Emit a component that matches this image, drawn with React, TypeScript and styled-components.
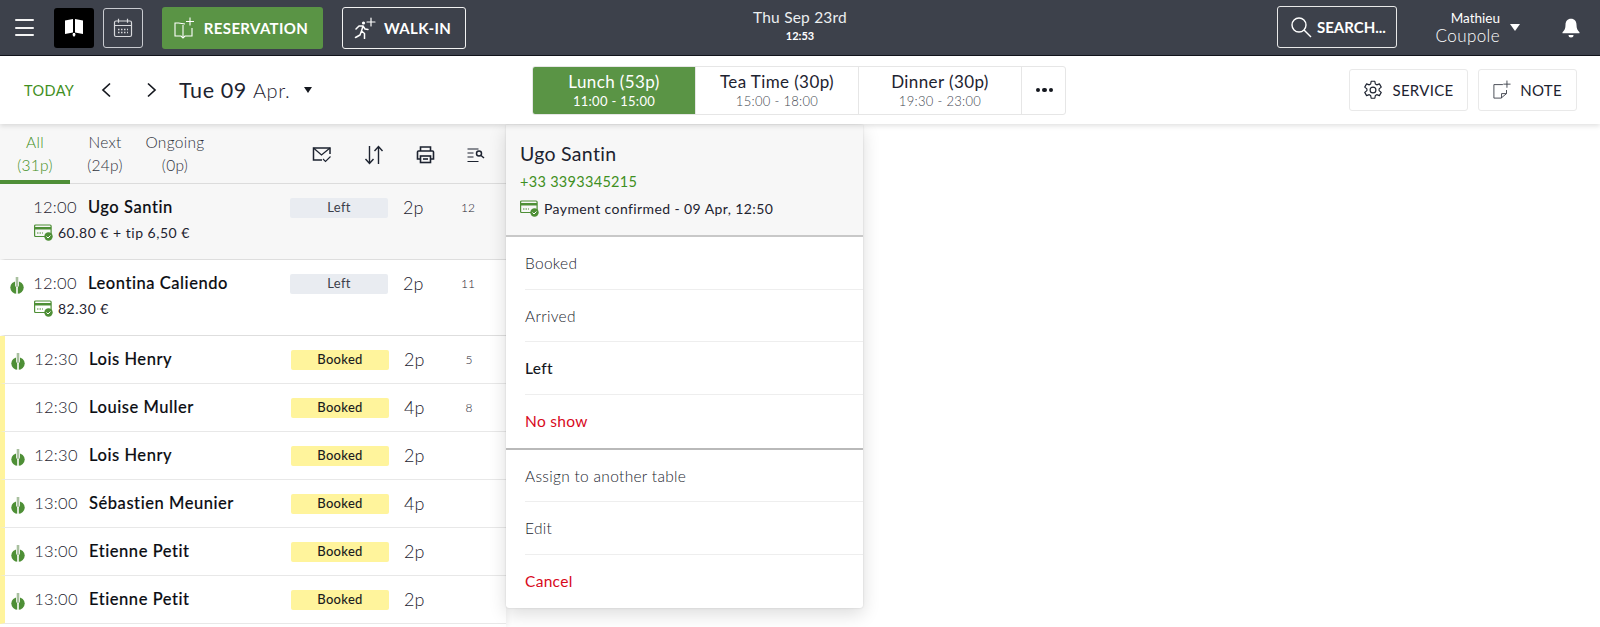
import React from "react";
import styled, { createGlobalStyle } from "styled-components";

const Global = createGlobalStyle`
  html, body { margin: 0; padding: 0; background: #fff; }
  body { font-family: "Lato", "Open Sans", sans-serif; color: #1d2330; overflow: hidden; }
  * { box-sizing: border-box; }
`;

const Page = styled.div`width: 1600px; height: 627px; overflow: hidden; display: flex; flex-direction: column;`;

const TopBar = styled.header`
  height: 56px; flex: none; background: #3d414b; border-bottom: 1px solid #12141c;
  display: grid; grid-template-columns: 1fr auto 1fr; align-items: center; color: #fff;
`;
const TopLeft = styled.div`display: flex; align-items: center; padding-left: 15px;`;
const TopRight = styled.div`display: flex; align-items: center; justify-content: flex-end;`;
const MenuBtn = styled.button`
  width: 19px; height: 17px; margin-right: 20px; padding: 0; border: 0; background: none;
  display: flex; flex-direction: column; justify-content: space-between;
`;
const MenuLine = styled.span`display: block; height: 2px; background: #f4f4f4; border-radius: 1px;`;
const ViewBtn = styled.button<{ $on?: boolean }>`
  width: 40px; height: 40px; margin-right: 9px; padding: 0; border-radius: 3px;
  display: flex; align-items: center; justify-content: center;
  background: ${p => (p.$on ? "#000" : "transparent")};
  border: ${p => (p.$on ? "0" : "1px solid #c9cbd0")};
`;
const ActionBtn = styled.button<{ $w: number; $green?: boolean; $ml: number }>`
  width: ${p => p.$w}px; height: 42px; margin-left: ${p => p.$ml}px; border-radius: 3px; padding: 0 3px 0 0;
  display: flex; align-items: center; justify-content: center; gap: 8px;
  background: ${p => (p.$green ? "#5a9445" : "transparent")};
  border: ${p => (p.$green ? "0" : "1px solid #f2f2f2")};
  color: #fff; font: 700 15px "Lato", sans-serif; letter-spacing: .35px;
`;
const Clock = styled.div`text-align: center; transform: translateY(-2px);`;
const ClockDate = styled.div`font-size: 15.5px; line-height: 20px; font-weight: 400; color: #eceef0; letter-spacing: .2px;`;
const ClockTime = styled.div`font-size: 11px; line-height: 16px; font-weight: 700; margin-top: 1px;`;
const SearchBtn = styled.button`
  width: 120px; height: 42px; border: 1px solid #e8e8e8; border-radius: 3px; background: transparent; padding: 0 0 0 12px;
  display: flex; align-items: center; gap: 5px; color: #fff; font: 700 15px "Lato", sans-serif; margin-top: -2px;
`;
const User = styled.div`width: 103px; text-align: right; display: block;`;
const UserName = styled.div`font-size: 13.5px; line-height: 16px; font-weight: 400;`;
const UserPlace = styled.div`font-size: 17px; line-height: 19px; font-weight: 300; color: #fff; letter-spacing: .4px;`;
const Caret = styled.span<{ $c: string; $ml: number; $s?: number }>`
  width: 0; height: 0; margin-left: ${p => p.$ml}px;
  border-left: ${p => p.$s ?? 5}px solid transparent; border-right: ${p => p.$s ?? 5}px solid transparent;
  border-top: ${p => (p.$s ?? 5) + 2}px solid ${p => p.$c};
`;
const BellSlot = styled.div`margin: 0 20px 0 42px; display: flex;`;

const SubBar = styled.div`
  height: 68px; flex: none; background: #fff; position: relative; z-index: 3;
  box-shadow: 0 2px 5px rgba(0,0,0,.12);
  display: grid; grid-template-columns: 532px 534px 1fr; align-items: center;
`;
const DateNav = styled.div`display: flex; align-items: center; padding-left: 24px;`;
const Today = styled.span`color: #3f8f22; font-size: 14.5px; letter-spacing: .4px; width: 60px;`;
const Chev = styled.span`display: flex; width: 45px; justify-content: center; color: #15181f;`;
const DateText = styled.span`font-size: 21.5px; font-weight: 400; letter-spacing: .6px; margin-left: 5px;`;
const Month = styled.span`font-weight: 300; font-size: 20px;`;

const Services = styled.div`
  width: 534px; height: 49px; display: grid; grid-template-columns: 163px 163px 163px 45px;
  border: 1px solid #e6e6e6; border-radius: 3px; overflow: hidden;
`;
const Service = styled.div<{ $on?: boolean }>`
  display: flex; flex-direction: column; align-items: center; justify-content: center;
  background: ${p => (p.$on ? "#5a9445" : "#fff")}; color: ${p => (p.$on ? "#fff" : "#1d2330")};
  border-right: 1px solid #e6e6e6;
`;
const ServiceName = styled.span`font-size: 17px; line-height: 21px; letter-spacing: .4px;`;
const ServiceHours = styled.span<{ $on?: boolean }>`
  font-size: 13px; line-height: 18px; font-weight: ${p => (p.$on ? 400 : 300)}; color: ${p => (p.$on ? "#fff" : "#444952")}; letter-spacing: .3px;
`;
const More = styled.div`display: flex; align-items: center; justify-content: center; gap: 2px;`;
const Dot = styled.i`width: 4.5px; height: 4.5px; border-radius: 50%; background: #15181f;`;
const SubRight = styled.div`display: flex; justify-content: flex-end; gap: 10px; padding-right: 23px;`;
const GhostBtn = styled.button<{ $w: number }>`
  width: ${p => p.$w}px; height: 42px; border: 1px solid #e9e9e9; border-radius: 3px; background: #fff; padding: 0;
  display: flex; align-items: center; justify-content: center; gap: 9px; color: #1d2330; font: 400 15px "Lato", sans-serif; letter-spacing: .3px;
`;

const Main = styled.div`flex: 1; display: flex; align-items: flex-start; min-height: 0;`;
const List = styled.section`width: 506px; flex: none; box-shadow: 2px 0 5px rgba(0,0,0,.06); height: 503px;`;
const Tabs = styled.div`height: 60px; background: #f7f7f7; border-bottom: 1px solid #dcdcdc; display: flex;`;
const Tab = styled.div<{ $on?: boolean }>`
  width: 70px; height: 60px; text-align: center; padding-top: 7px; font-size: 15.5px; line-height: 23px; font-weight: 300;
  color: ${p => (p.$on ? "#3f8f22" : "#2f333d")}; letter-spacing: .3px;
  border-bottom: ${p => (p.$on ? "4px solid #4f8f38" : "0")};
`;
const Tools = styled.div`margin-left: 102px; display: flex; align-items: center; height: 62px; gap: 32px;`;

const Row = styled.div<{ $stripe?: boolean; $open?: boolean; $tall?: boolean }>`
  height: ${p => (p.$tall ? 76 : 48)}px;
  padding: 12px 0 0 ${p => (p.$stripe ? 6 : 5)}px;
  border-left: 5px solid ${p => (p.$stripe ? "#fff49c" : "transparent")};
  border-bottom: 1px solid ${p => (p.$stripe ? "#e8e8e8" : "#dedede")};
  background: ${p => (p.$open ? "#f7f7f7" : "#fff")};
`;
const Line = styled.div`display: grid; grid-template-columns: 23px 44px 213px 98px 15px 40px 50px; height: 20px; align-items: center;`;
const LeafSlot = styled.span`display: flex; padding-top: 3px;`;
const Time = styled.span`text-align: center; font-size: 16.5px; font-weight: 300; color: #1d2330; letter-spacing: .3px; padding-bottom: 2px;`;
const Name = styled.span`padding: 0 0 2px 11px; font-size: 16.5px; font-weight: 500; color: #0b0d12; white-space: nowrap; letter-spacing: .55px; -webkit-text-stroke: .15px #0b0d12;`;
const Badge = styled.span<{ $booked?: boolean }>`
  height: 20px; border-radius: 2px; text-align: center; font-size: 13px; line-height: 19px;
  background: ${p => (p.$booked ? "#fff49c" : "#e9ecf1")}; color: ${p => (p.$booked ? "#1b1c20" : "#3c404a")};
  font-weight: ${p => (p.$booked ? 500 : 400)}; letter-spacing: .3px;
`;
const Pax = styled.span`grid-column: 6; font-size: 18px; font-weight: 300; color: #1d2330; padding-bottom: 2px;`;
const Table = styled.span`grid-column: 7; text-align: center; font-size: 12px; font-weight: 300; color: #1d2330; padding-bottom: 2px;`;
const Pay = styled.div`display: flex; align-items: center; gap: 5px; height: 20px; margin: 6px 0 0 24px; font-size: 14px; color: #1d2330; letter-spacing: .5px;`;

const Pop = styled.aside`
  width: 357px; margin-top: 1px; background: #fff; border-radius: 0 0 3px 3px;
  box-shadow: 0 6px 18px rgba(0,0,0,.14), 0 0 2px rgba(0,0,0,.15); position: relative; z-index: 2;
`;
const PopHead = styled.div`height: 112px; padding: 17px 14px 0; background: #f7f7f7; border-bottom: 2px solid #c8c8c8;`;
const PopName = styled.div`font-size: 19.5px; line-height: 24px; letter-spacing: .3px; color: #1d2330;`;
const PopPhone = styled.div`font-size: 14.5px; line-height: 20px; margin-top: 6px; color: #3f8f22; letter-spacing: .3px;`;
const PopPay = styled.div`display: flex; align-items: center; gap: 5px; margin-top: 6px; height: 20px; font-size: 14px; color: #1d2330; letter-spacing: .4px;`;
const Group = styled.div<{ $sep?: boolean }>`border-bottom: ${p => (p.$sep ? "2px solid #b9b9b9" : "0")};`;
const Item = styled.div<{ $tone?: "red" | "dark"; $last?: boolean }>`
  height: 52.7px; margin-left: 19px; display: flex; align-items: center; font-size: 15.5px; letter-spacing: .3px;
  border-bottom: ${p => (p.$last ? "0" : "1px solid #eeeeee")};
  font-weight: ${p => (p.$tone === "dark" ? 500 : p.$tone === "red" ? 400 : 300)};
  color: ${p => (p.$tone === "red" ? "#d8091c" : p.$tone === "dark" ? "#15181f" : "#23262f")};
`;

const Book = () => (
  <svg width="18" height="20" viewBox="0 0 18 20"><path fill="#fff" d="M0 2.500 8 1v13.500L0 16zM10 1l8 1.500V16l-8-1.500zM8 15h2l.5 2L9 19l-1.500-2z" /></svg>
);
const Calendar = () => (
  <svg width="20" height="20" viewBox="0 0 20 20" fill="none" stroke="#d8d9dc" strokeWidth="1.200"><rect x="1.500" y="3" width="17" height="15.500" rx="1.500" /><path d="M1.500 7.500h17M5.500 .8v4M14.500 .8v4" /><path stroke="#d8d9dc" strokeWidth="1.500" strokeDasharray="1.500 1.500" d="M5 11.500h10M5 14.500h10" /></svg>
);
const BookPlus = () => (
  <svg width="22" height="22" viewBox="0 0 22 22" fill="none" stroke="#fff" strokeWidth="1.100"><path d="M11 7 4.500 6H1v13h6l2 2 2-2h7v-8" /><path d="M9 8v12" /><path d="M16 .5v8M12 4.500h8" /></svg>
);
const Walker = () => (
  <svg width="22" height="22" viewBox="0 0 22 22" fill="none" stroke="#fff" strokeWidth="1.500" strokeLinecap="round" strokeLinejoin="round"><circle cx="9.500" cy="6" r="1.600" fill="#fff" stroke="none" /><path d="m2 12 3-3h4l-1.500 5 3 2.500v5M7.500 14 6 18l-4.500 2.500M9 9l2 3 3 .5" /><path strokeWidth="1.200" d="M17 1v8M13 5h8" /></svg>
);
const Search = () => (
  <svg width="22" height="22" viewBox="0 0 22 22" fill="none" stroke="#fff" strokeWidth="1.400"><circle cx="9" cy="9" r="7" /><path d="m14 14 7 7" /></svg>
);
const Bell = () => (
  <svg width="18" height="20" viewBox="0 0 18 20" fill="#fff"><path d="M9 .8c3.500 0 5.500 2.600 5.500 6 0 3.700 1 5.500 3 7.500v1H.5v-1c2-2 3-3.800 3-7.500 0-3.400 2-6 5.500-6z" /><path d="M6.500 17h5A2.500 2.500 0 0 1 9 19.500 2.500 2.500 0 0 1 6.500 17z" /></svg>
);
const Back = ({ flip }: { flip?: boolean }) => (
  <svg width="11" height="16" viewBox="0 0 11 16" fill="none" stroke="currentColor" strokeWidth="1.700" style={flip ? { transform: "scaleX(-1)" } : undefined}><path d="M9 1.500 2 8l7 6.500" /></svg>
);
const Gear = () => (
  <svg width="20" height="20" viewBox="0 0 24 24" fill="none" stroke="#1d2330" strokeWidth="1.400" strokeLinejoin="round"><circle cx="12" cy="12" r="3.500" /><path d="M9.800 1.500h4.400l.6 3.300 1.700 1 3.200-1.100 2.200 3.800-2.600 2.200v2l2.600 2.200-2.200 3.800-3.200-1.100-1.700 1-.6 3.300H9.800l-.6-3.300-1.700-1-3.200 1.100-2.200-3.800 2.600-2.200v-2L2.100 8.500l2.200-3.800 3.200 1.100 1.700-1z" /></svg>
);
const NoteIcon = () => (
  <svg width="18" height="20" viewBox="0 0 20 22" fill="none" stroke="#3a3e48" strokeWidth="1"><path d="M11 5H1v15h8l6-5v-4" /><path d="M9.500 20v-5H15" /><path d="M15.500 .5v8M11.500 4.500h8" /></svg>
);
const MailCheck = () => (
  <svg width="20" height="18" viewBox="0 0 20 18" fill="none" stroke="#1d2330" strokeWidth="1.300"><path d="M10 14H1.500V2H18v6" strokeWidth="1.500" /><path d="m1.500 2 8 7 8.500-7" /><path d="m11 13 2.500 2.500 5-5" strokeWidth="1.100" /></svg>
);
const SortIcon = () => (
  <svg width="20" height="20" viewBox="0 0 20 20" fill="none" stroke="#1d2330" strokeWidth="1.400"><path d="M5.500 1v17M1.500 14l4 4.500 4-4.500M14.500 19V2M10.500 6l4-4.500 4 4.500" /></svg>
);
const Printer = () => (
  <svg width="19" height="18" viewBox="0 0 19 18" fill="none" stroke="#1d2330" strokeWidth="1.600"><path d="M4.500 5V1h10v4" /><path d="M4.500 13h-3V6c0-.6.4-1 1-1h14c.6 0 1 .4 1 1v7h-3" /><rect x="4.500" y="10" width="10" height="6.500" /><path d="M7 13h5" /></svg>
);
const ListSearch = () => (
  <svg width="19" height="16" viewBox="0 0 19 16" fill="none" stroke="#1d2330" strokeWidth="1.200"><path d="M.5 2h11M.5 6h6M.5 10h6M.5 14.500h11" /><circle cx="12" cy="6.500" r="2.500" strokeWidth="1.500" /><path d="m14 8.500 3 2.500" strokeWidth="1.500" /></svg>
);
const Leaf = () => (
  <svg width="14" height="17" viewBox="0 0 14 17">
    <ellipse cx="7" cy="10.500" rx="6.700" ry="6.300" fill="#4e8f36" />
    <path fill="#fff" d="M5 2h4v6.500L7.800 10.500V17H6.200v-6.500L5 8.500z" />
    <path fill="#a9c09f" d="M5.700 0h2.600v8.500l-.7 1.500h-1.200l-.7-1.500z" />
  </svg>
);
const Card = () => (
  <svg width="19" height="17" viewBox="0 0 19 17" fill="none"><rect x=".6" y="1" width="16.500" height="11.500" rx="1" stroke="#4e8f36" strokeWidth="1.200" /><path fill="#4e8f36" d="M.6 3h16.500v2.500H.6z" /><path stroke="#4e8f36" strokeWidth="1" strokeDasharray="1.500 1" d="M3 9h6" /><circle cx="14.500" cy="12.500" r="4.200" fill="#4e8f36" /><path d="m12.500 12.500 1.500 1.500 2.500-2.500" stroke="#fff" strokeWidth="1" /></svg>
);

type R = { time: string; name: string; pax: string; table?: string; leaf?: boolean };
const booked: R[] = [
  { time: "12:30", name: "Lois Henry", pax: "2p", table: "5", leaf: true },
  { time: "12:30", name: "Louise Muller", pax: "4p", table: "8" },
  { time: "12:30", name: "Lois Henry", pax: "2p", leaf: true },
  { time: "13:00", name: "Sébastien Meunier", pax: "4p", leaf: true },
  { time: "13:00", name: "Etienne Petit", pax: "2p", leaf: true },
  { time: "13:00", name: "Etienne Petit", pax: "2p", leaf: true },
];

export default function App() {
  return (
    <Page>
      <Global />
      <TopBar>
        <TopLeft>
          <MenuBtn aria-label="menu"><MenuLine /><MenuLine /><MenuLine /></MenuBtn>
          <ViewBtn $on><Book /></ViewBtn>
          <ViewBtn><Calendar /></ViewBtn>
          <ActionBtn $green $w={161} $ml={10}><BookPlus />RESERVATION</ActionBtn>
          <ActionBtn $w={124} $ml={19}><Walker />WALK-IN</ActionBtn>
        </TopLeft>
        <Clock>
          <ClockDate>Thu Sep 23rd</ClockDate>
          <ClockTime>12:53</ClockTime>
        </Clock>
        <TopRight>
          <SearchBtn><Search />SEARCH...</SearchBtn>
          <User>
            <UserName>Mathieu</UserName>
            <UserPlace>Coupole</UserPlace>
          </User>
          <Caret $c="#fff" $ml={10} />
          <BellSlot><Bell /></BellSlot>
        </TopRight>
      </TopBar>

      <SubBar>
        <DateNav>
          <Today>TODAY</Today>
          <Chev><Back /></Chev>
          <Chev><Back flip /></Chev>
          <DateText>Tue 09 <Month>Apr.</Month></DateText>
          <Caret $c="#15181f" $ml={14} $s={4} />
        </DateNav>
        <Services>
          <Service $on><ServiceName>Lunch (53p)</ServiceName><ServiceHours $on>11:00 - 15:00</ServiceHours></Service>
          <Service><ServiceName>Tea Time (30p)</ServiceName><ServiceHours>15:00 - 18:00</ServiceHours></Service>
          <Service><ServiceName>Dinner (30p)</ServiceName><ServiceHours>19:30 - 23:00</ServiceHours></Service>
          <More><Dot /><Dot /><Dot /></More>
        </Services>
        <SubRight>
          <GhostBtn $w={119}><Gear />SERVICE</GhostBtn>
          <GhostBtn $w={99}><NoteIcon />NOTE</GhostBtn>
        </SubRight>
      </SubBar>

      <Main>
        <List>
          <Tabs>
            <Tab $on>All<br />(31p)</Tab>
            <Tab>Next<br />(24p)</Tab>
            <Tab>Ongoing<br />(0p)</Tab>
            <Tools><MailCheck /><SortIcon /><Printer /><ListSearch /></Tools>
          </Tabs>
          <Row $open $tall>
            <Line>
              <span />
              <Time>12:00</Time>
              <Name>Ugo Santin</Name>
              <Badge>Left</Badge>
              <Pax>2p</Pax>
              <Table>12</Table>
            </Line>
            <Pay><Card />60.80 € + tip 6,50 €</Pay>
          </Row>
          <Row $tall>
            <Line>
              <LeafSlot><Leaf /></LeafSlot>
              <Time>12:00</Time>
              <Name>Leontina Caliendo</Name>
              <Badge>Left</Badge>
              <Pax>2p</Pax>
              <Table>11</Table>
            </Line>
            <Pay><Card />82.30 €</Pay>
          </Row>
          {booked.map((r, i) => (
            <Row $stripe key={i}>
              <Line>
                <LeafSlot>{r.leaf && <Leaf />}</LeafSlot>
                <Time>{r.time}</Time>
                <Name>{r.name}</Name>
                <Badge $booked>Booked</Badge>
                <Pax>{r.pax}</Pax>
                {r.table && <Table>{r.table}</Table>}
              </Line>
            </Row>
          ))}
        </List>

        <Pop>
          <PopHead>
            <PopName>Ugo Santin</PopName>
            <PopPhone>+33 3393345215</PopPhone>
            <PopPay><Card />Payment confirmed - 09 Apr, 12:50</PopPay>
          </PopHead>
          <Group $sep>
            <Item>Booked</Item>
            <Item>Arrived</Item>
            <Item $tone="dark">Left</Item>
            <Item $tone="red" $last>No show</Item>
          </Group>
          <Group>
            <Item>Assign to another table</Item>
            <Item>Edit</Item>
            <Item $tone="red" $last>Cancel</Item>
          </Group>
        </Pop>
      </Main>
    </Page>
  );
}
